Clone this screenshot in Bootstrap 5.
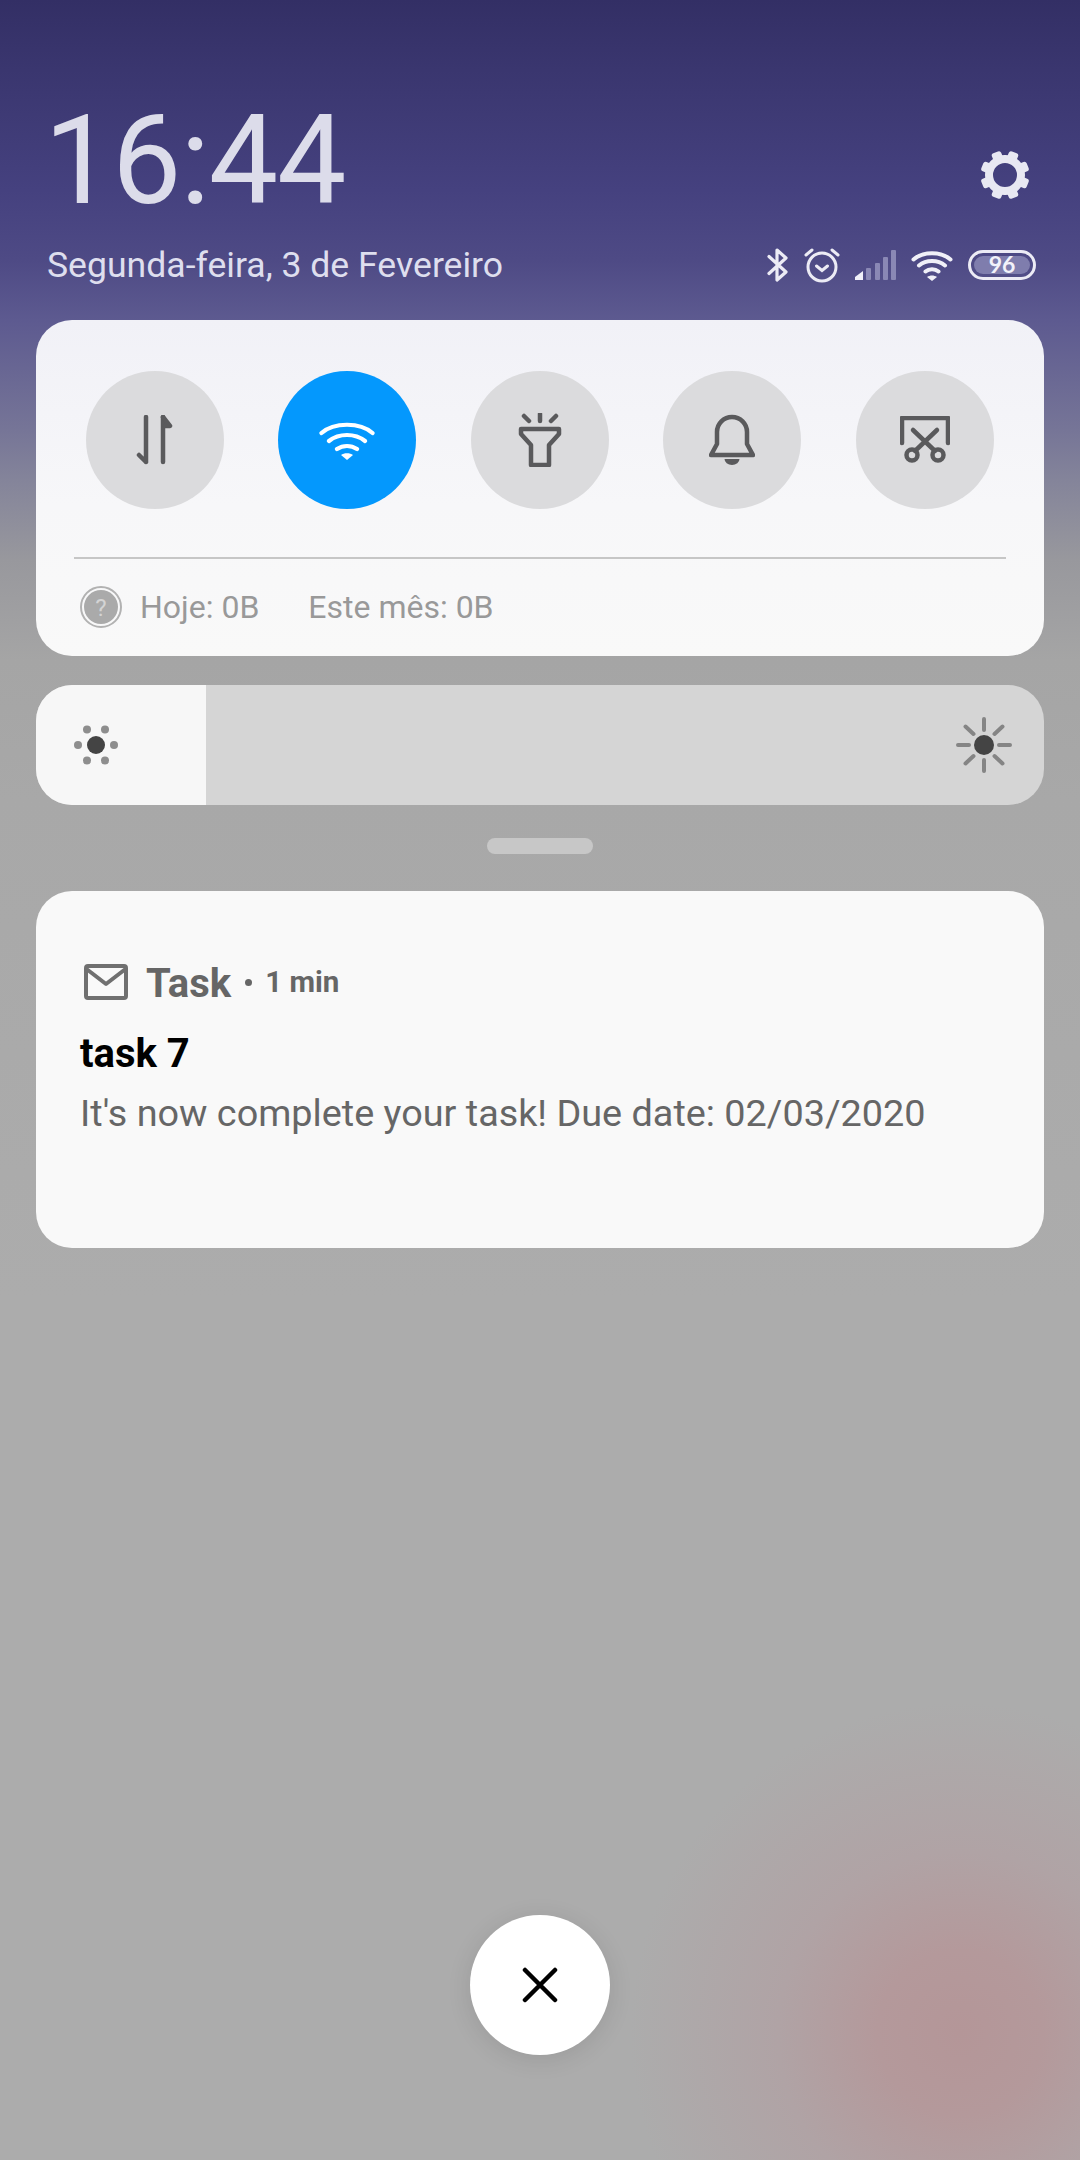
<!DOCTYPE html>
<html lang="pt">
<head>
<meta charset="utf-8">
<title>Notificações</title>
<link href="https://cdn.jsdelivr.net/npm/bootstrap@5.3.0/dist/css/bootstrap.min.css" rel="stylesheet">
<style>
html,body{height:2160px;width:1080px;margin:0;overflow:hidden}
body{font-family:Roboto,"Liberation Sans",sans-serif;background:
 radial-gradient(circle 330px at 960px 2033px,rgb(180,150,152) 0,rgb(180,153,155) 25%,rgb(176,163,165) 55%,rgba(172,172,172,0) 100%),
 linear-gradient(180deg,#332f65 0,#3a366f 70px,#45417f 190px,#4e4a85 260px,#5d5a90 320px,#767597 430px,#84849a 480px,#98989d 560px,#a5a5a5 660px,#a8a8a8 800px,#acacac 1300px,#acacac 2160px)}
.shade{height:2160px;padding:0 36px}
.top-zone{height:320px;color:#dcdcea}
.clock-row{height:240px;padding-left:8px;padding-right:14px}
.clock{font-size:123.500px;line-height:1;font-weight:400;letter-spacing:-1.3px;padding-top:99px;color:#dcdcea}
.gear{margin-top:150px}
.date-row{height:50px;padding-left:11px;padding-right:8px}
.date{font-size:35.6px;line-height:44px;color:#dedeee}
.stat-icons{gap:15px}
.panel{height:336px;border-radius:36px;background:linear-gradient(180deg,#f1f1f7 0,#f7f7f9 55%,#f9f9f9 100%);padding:51px 50.5px 0 50px}
.round{width:138px;height:138px;border-radius:50%;background:#dbdbdd;flex:none}
.round-on{background:#0498fd}
.rule{height:2px;background:#c6c6c6;margin:48px -12px 0}
.usage{margin:26px -12px 0;padding-left:6px;font-size:32px;line-height:44px;color:#999}
.usage-a{margin-left:18px}
.usage-b{margin-left:49px}
.bright{height:120px;margin-top:29px;border-radius:36px;background:#d5d5d5;overflow:hidden}
.bright-fill{width:170px;background:#f7f7f7;padding-left:38px}
.bright-end{padding-right:32px}
.grip{width:106px;height:16px;border-radius:8px;background:#c7c7c7;margin:33px auto 37px}
.note{height:357px;border-radius:36px;background:#f9f9f9;padding:68px 44px 0}
.note-head{height:46px;color:#666;padding-left:4px}
.app{font-size:40px;font-weight:700;line-height:50px;margin-left:18px;padding-top:3px}
.dotsep{width:7px;height:7px;border-radius:50%;background:#666;margin:0 13px 0 14px}
.ago{font-size:29.500px;font-weight:700;line-height:46px}
.note-title{font-size:40px;font-weight:700;line-height:50px;color:#000;margin-top:24px}
.note-body{font-size:37.8px;line-height:46px;color:#666;margin-top:11px;white-space:nowrap}
.closer{width:140px;height:140px;border-radius:50%;background:#fff;margin:667px auto 0;box-shadow:0 4px 24px rgba(0,0,0,.1)}
</style>
</head>
<body>
<div class="shade d-flex flex-column">
  <div class="top-zone">
    <div class="clock-row d-flex justify-content-between align-items-start">
      <div class="clock">16:44</div>
      <svg class="gear" width="50" height="50" viewBox="-25 -25 50 50"><circle r="16" fill="none" stroke="#e8e8f2" stroke-width="8"/><g fill="#e8e8f2"><rect x="-5" y="-24.500" width="10" height="9" rx="2.500" transform="rotate(22.5)"/><rect x="-5" y="-24.500" width="10" height="9" rx="2.500" transform="rotate(67.5)"/><rect x="-5" y="-24.500" width="10" height="9" rx="2.500" transform="rotate(112.5)"/><rect x="-5" y="-24.500" width="10" height="9" rx="2.500" transform="rotate(157.5)"/><rect x="-5" y="-24.500" width="10" height="9" rx="2.500" transform="rotate(202.5)"/><rect x="-5" y="-24.500" width="10" height="9" rx="2.500" transform="rotate(247.5)"/><rect x="-5" y="-24.500" width="10" height="9" rx="2.500" transform="rotate(292.5)"/><rect x="-5" y="-24.500" width="10" height="9" rx="2.500" transform="rotate(337.5)"/></g></svg>
    </div>
    <div class="date-row d-flex justify-content-between align-items-center">
      <div class="date">Segunda-feira, 3 de Fevereiro</div>
      <div class="stat-icons d-flex align-items-center">
        <svg width="22" height="36" viewBox="0 0 22 36"><path d="M2 9.500 19 25 10 33V3l9 8L2 26.500" fill="none" stroke="#ecebf5" stroke-width="3.200" stroke-linejoin="round" stroke-linecap="round"/></svg>
        <svg width="36" height="36" viewBox="0 0 36 36" fill="none" stroke="#ecebf5" stroke-width="3" stroke-linecap="round"><circle cx="18" cy="20" r="14"/><path d="M12.500 19l5.500 4.500 5.500-4.500M2 8l6-5M34 8l-6-5"/></svg>
        <svg width="41" height="30" viewBox="0 0 41 30"><path d="M0 30v-3l8-6v9z" fill="#f0f0f8"/><g fill="#8a88b5"><rect x="11" y="18" width="5" height="12" rx="1"/><rect x="20" y="13" width="5" height="17" rx="1"/><rect x="28" y="7" width="5" height="23" rx="1"/><rect x="36" y="0" width="5" height="30" rx="1"/></g></svg>
        <svg width="42" height="31" viewBox="0 0 42 31" fill="none" stroke="#f0f0f8" stroke-width="4" stroke-linecap="round"><path d="M2.500 9.500C12 1 30 1 39.500 9.500M8 15.500c7-6 19-6 26 0M14.500 21.500c3.500-3 9.500-3 13 0"/><path d="M21 31l-5-4c3-2 7-2 10 0z" fill="#f0f0f8" stroke="none"/></svg>
        <svg width="68" height="30" viewBox="0 0 68 30"><rect x="1.500" y="1.500" width="65" height="27" rx="13.500" fill="none" stroke="#ecebf5" stroke-width="3"/><rect x="6" y="6" width="56" height="18" rx="9" fill="#7f7dad"/><text x="34" y="23" text-anchor="middle" font-family="Lato,sans-serif" font-size="23" font-weight="700" fill="#f2f2fa">96</text></svg>
      </div>
    </div>
  </div>

  <div class="panel">
    <div class="d-flex justify-content-between">
      <div class="round d-flex align-items-center justify-content-center">
        <svg width="40" height="50" viewBox="0 0 40 50" fill="none" stroke="#5a5a5c" stroke-width="4.500" stroke-linecap="round" stroke-linejoin="round"><path d="M11 2v45M4 40l7 7M28 47V2"/><path d="M28 2l7 9h-5" fill="#5a5a5c"/></svg>
      </div>
      <div class="round round-on d-flex align-items-center justify-content-center">
        <svg width="56" height="40" viewBox="0 0 56 40" fill="none" stroke="#fff" stroke-width="4.200" stroke-linecap="round"><path d="M2.500 13C15 2 41 2 53.500 13M10 21c10-8 26-8 36 0M18 29c6-4 14-4 20 0"/><path d="M28 40l-6-5c3-2.500 9-2.500 12 0z" fill="#fff" stroke="none"/></svg>
      </div>
      <div class="round d-flex align-items-center justify-content-center">
        <svg width="44" height="54" viewBox="0 0 44 54" fill="none" stroke="#5a5a5c" stroke-width="4.500" stroke-linejoin="round" stroke-linecap="round"><path d="M3 16h38v5l-10 11v20H13V32L3 21z"/><path d="M22 1v7M6 3l5 5M38 3l-5 5"/></svg>
      </div>
      <div class="round d-flex align-items-center justify-content-center">
        <svg width="46" height="52" viewBox="0 0 46 52" fill="none" stroke="#5a5a5c" stroke-width="4.500" stroke-linejoin="round"><path d="M8 30V18a15 15 0 0 1 30 0v12l6 11H2z"/><path d="M15.500 45h15a7.500 6 0 0 1-15 0z" fill="#5a5a5c" stroke="none"/></svg>
      </div>
      <div class="round d-flex align-items-center justify-content-center">
        <svg width="50" height="48" viewBox="0 0 50 48" fill="none" stroke="#5a5a5c" stroke-width="4.500" stroke-linecap="round" stroke-linejoin="round"><path d="M2 27V2h46v25"/><path d="M13 14l22 21M37 14L15 35"/><circle cx="12" cy="39" r="5.500"/><circle cx="38" cy="39" r="5.500"/></svg>
      </div>
    </div>
    <div class="rule"></div>
    <div class="usage d-flex align-items-center">
      <svg width="42" height="42" viewBox="0 0 42 42"><circle cx="21" cy="21" r="20" fill="none" stroke="#b2b2b2" stroke-width="2"/><circle cx="21" cy="21" r="17" fill="#aaa"/><text x="21" y="30" text-anchor="middle" font-family="Roboto,sans-serif" font-size="24" fill="#d4d4d4">?</text></svg>
      <span class="usage-a">Hoje: 0B</span><span class="usage-b">Este mês: 0B</span>
    </div>
  </div>

  <div class="bright d-flex">
    <div class="bright-fill d-flex align-items-center">
      <svg width="44" height="44" viewBox="0 0 44 44"><g fill="#8e8e8e"><circle cx="4" cy="22" r="4"/><circle cx="40" cy="22" r="4"/><circle cx="13" cy="6.500" r="4"/><circle cx="31" cy="6.500" r="4"/><circle cx="13" cy="37.500" r="4"/><circle cx="31" cy="37.500" r="4"/></g><circle cx="22" cy="22" r="9" fill="#444"/></svg>
    </div>
    <div class="bright-end flex-grow-1 d-flex align-items-center justify-content-end">
      <svg width="56" height="56" viewBox="0 0 56 56"><g stroke="#858585" stroke-width="4" stroke-linecap="round"><path d="M28 2v11M28 43v11M2 28h11M43 28h11M9.500 9.500l8 7.500M38.500 39l8 7.500M46.500 9.500l-8 7.500M17.500 39l-8 7.500"/></g><circle cx="28" cy="28" r="10" fill="#444"/></svg>
    </div>
  </div>

  <div class="grip"></div>

  <div class="note">
    <div class="note-head d-flex align-items-center">
      <svg width="44" height="36" viewBox="0 0 44 36" fill="none" stroke="#707070" stroke-width="4" stroke-linejoin="round"><rect x="2" y="2" width="40" height="32" rx="2"/><path d="M2.500 5 22 20 41.500 5"/></svg>
      <span class="app">Task</span><span class="dotsep"></span><span class="ago">1 min</span>
    </div>
    <div class="note-title">task 7</div>
    <div class="note-body">It's now complete your task! Due date: 02/03/2020</div>
  </div>

  <div class="closer d-flex align-items-center justify-content-center">
    <svg width="36" height="36" viewBox="0 0 36 36"><path d="M3 3l30 30M33 3 3 33" stroke="#000" stroke-width="4.500" stroke-linecap="round"/></svg>
  </div>
</div>
<script src="https://cdn.jsdelivr.net/npm/bootstrap@5.3.0/dist/js/bootstrap.bundle.min.js"></script>
</body>
</html>
